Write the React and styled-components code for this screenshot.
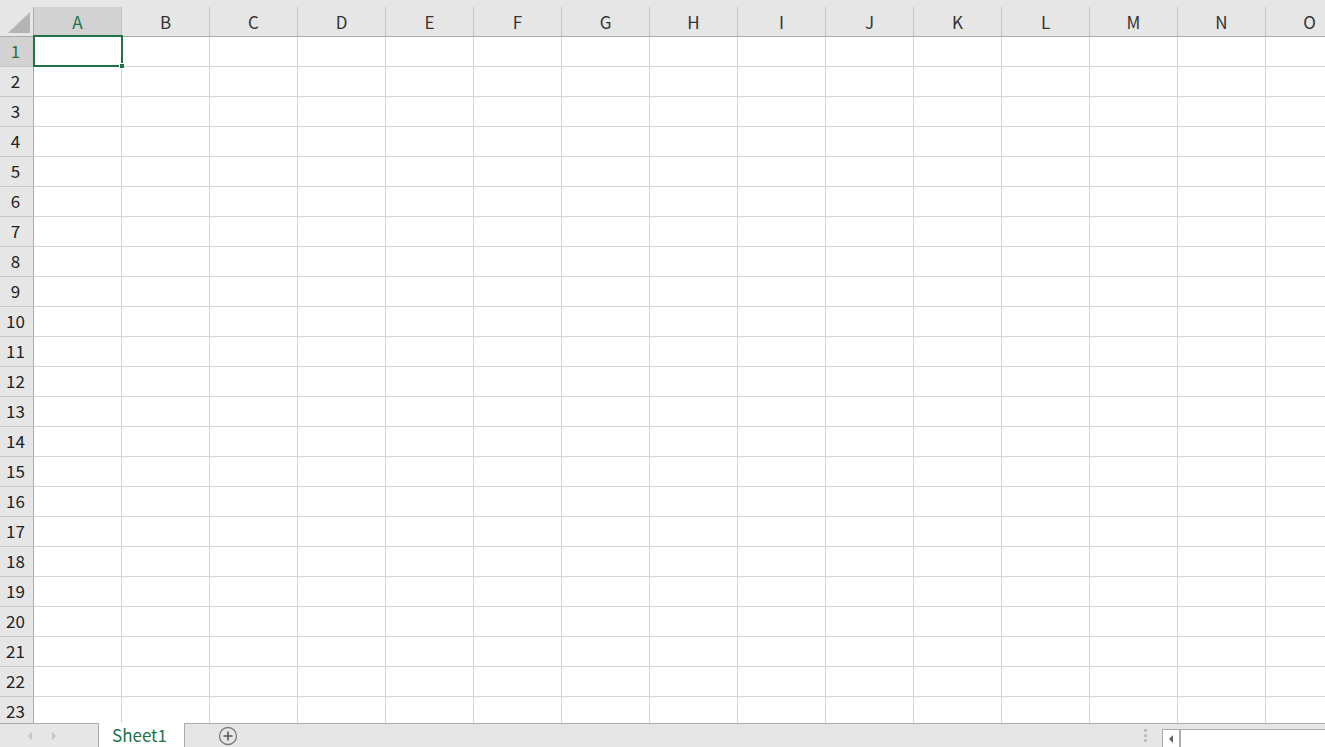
import React from "react";
import styled, { createGlobalStyle } from "styled-components";

const GlobalStyle = createGlobalStyle`
  html, body { margin: 0; padding: 0; height: 100%; overflow: hidden; background: #ffffff; }
  #root { height: 100%; }
  * { box-sizing: border-box; }
`;

const COLS = ["A", "B", "C", "D", "E", "F", "G", "H", "I", "J", "K", "L", "M", "N", "O"];
const ROWS = Array.from({ length: 23 }, (_, i) => i + 1);

const Window = styled.div`
  display: flex;
  flex-direction: column;
  width: 1325px;
  height: 747px;
  background: #e6e6e6;
  font-family: "Noto Sans CJK JP", "Noto Sans", "Liberation Sans", sans-serif;
`;

const Sheet = styled.div`
  flex: 1;
  overflow: hidden;
  padding-top: 7px;
  background: #e6e6e6;
`;

const Grid = styled.div`
  display: grid;
  grid-template-columns: 34px repeat(15, 88px);
  grid-auto-rows: 30px;
  width: max-content;
`;

const Corner = styled.div`
  position: relative;
  background: #e6e6e6;
  border-right: 1px solid #ababab;
  border-bottom: 1px solid #ababab;
  display: flex;
  align-items: flex-end;
  justify-content: flex-end;
  padding: 0 3px 3px 0;
`;

const Triangle = styled.div`
  width: 0;
  height: 0;
  border-left: 22px solid transparent;
  border-bottom: 21px solid #b4b4b4;
`;

const ColHead = styled.div`
  display: flex;
  align-items: center;
  justify-content: center;
  background: ${(p) => (p.$selected ? "#d2d2d2" : "#e6e6e6")};
  border-right: 1px solid #c6c6c6;
  border-bottom: 1px solid #ababab;
  color: ${(p) => (p.$selected ? "#217346" : "#333333")};
  font-size: 17px;
  padding-bottom: 1px;
`;

const RowHead = styled.div`
  display: flex;
  align-items: center;
  justify-content: center;
  background: ${(p) => (p.$selected ? "#d2d2d2" : "#e6e6e6")};
  border-right: 1px solid #ababab;
  border-bottom: 1px solid #c6c6c6;
  color: ${(p) => (p.$selected ? "#217346" : "#222222")};
  font-size: 17px;
  padding: 0 2px 2px 0;
`;

const Cell = styled.div`
  position: relative;
  background: #ffffff;
  border-right: 1px solid #d4d4d4;
  border-bottom: 1px solid #d4d4d4;
`;

const Selection = styled.div`
  position: absolute;
  left: -1px;
  top: -2px;
  width: 90px;
  height: 32px;
  border: 2px solid #217346;
  z-index: 2;
  pointer-events: none;
`;

const Handle = styled.div`
  position: absolute;
  right: -4px;
  bottom: -4px;
  width: 6px;
  height: 6px;
  background: #217346;
  border: 1px solid #ffffff;
`;

const TabBar = styled.div`
  height: 24px;
  display: flex;
  align-items: stretch;
  background: #e6e6e6;
  border-top: 1px solid #ababab;
`;

const Nav = styled.div`
  width: 98px;
  display: flex;
  align-items: center;
  justify-content: center;
  gap: 20px;
  padding-right: 14px;
`;

const Arrow = styled.span`
  width: 0;
  height: 0;
  border-top: 4px solid transparent;
  border-bottom: 4px solid transparent;
  ${(p) => (p.$dir === "left" ? "border-right: 4px solid #c4c4c4;" : "border-left: 4px solid #c4c4c4;")}
`;

const Tab = styled.div`
  width: 87px;
  margin-top: -1px;
  background: #ffffff;
  border-left: 1px solid #ababab;
  border-right: 1px solid #ababab;
  display: flex;
  align-items: center;
  justify-content: center;
  color: #217346;
  font-size: 17px;
  padding: 0 4px 2px 0;
`;

const AddButton = styled.div`
  width: 86px;
  display: flex;
  align-items: center;
  justify-content: center;
`;

const Spacer = styled.div`
  flex: 1;
`;

const Grip = styled.div`
  width: 18px;
  display: flex;
  flex-direction: column;
  align-items: center;
  justify-content: center;
  gap: 2px;
  margin-right: 8px;
`;

const Dot = styled.span`
  width: 3px;
  height: 3px;
  background: #c0c0c0;
`;

const HScroll = styled.div`
  width: 163px;
  margin-top: 5px;
  display: flex;
  background: #ffffff;
  border-top: 1px solid #ababab;
  border-left: 1px solid #ababab;
`;

const ScrollBtn = styled.div`
  width: 18px;
  display: flex;
  align-items: center;
  justify-content: center;
  border-right: 2px solid #ababab;
  background: #ffffff;
`;

const ScrollArrow = styled.span`
  width: 0;
  height: 0;
  border-top: 4px solid transparent;
  border-bottom: 4px solid transparent;
  border-right: 4px solid #606060;
`;

export default function App() {
  return (
    <>
      <GlobalStyle />
      <Window>
        <Sheet>
          <Grid>
            <Corner>
              <Triangle />
            </Corner>
            {COLS.map((c, i) => (
              <ColHead key={c} $selected={i === 0}>
                {c}
              </ColHead>
            ))}
            {ROWS.map((r) => (
              <React.Fragment key={r}>
                <RowHead $selected={r === 1}>{r}</RowHead>
                {COLS.map((c, i) => (
                  <Cell key={c}>
                    {r === 1 && i === 0 && (
                      <Selection>
                        <Handle />
                      </Selection>
                    )}
                  </Cell>
                ))}
              </React.Fragment>
            ))}
          </Grid>
        </Sheet>
        <TabBar>
          <Nav>
            <Arrow $dir="left" />
            <Arrow $dir="right" />
          </Nav>
          <Tab>Sheet1</Tab>
          <AddButton>
            <svg width="20" height="20" viewBox="0 0 20 20">
              <circle cx="10" cy="10" r="8.5" fill="none" stroke="#7a7a7a" strokeWidth="1.3" />
              <path d="M10 5.5v9M5.5 10h9" stroke="#5a5a5a" strokeWidth="1.6" />
            </svg>
          </AddButton>
          <Spacer />
          <Grip>
            <Dot />
            <Dot />
            <Dot />
          </Grip>
          <HScroll>
            <ScrollBtn>
              <ScrollArrow />
            </ScrollBtn>
          </HScroll>
        </TabBar>
      </Window>
    </>
  );
}
